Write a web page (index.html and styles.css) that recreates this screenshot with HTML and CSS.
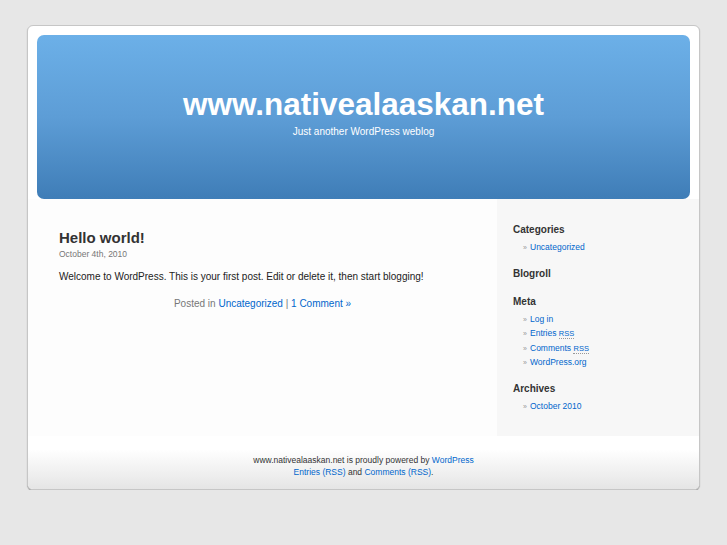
FILE: index.html
```html
<!DOCTYPE html>
<html lang="en">
<head>
<meta charset="utf-8">
<title>www.nativealaaskan.net</title>
<link rel="stylesheet" href="styles.css">
</head>
<body>
<div class="page">
  <header class="header">
    <h1 class="site-title"><a href="#">www.nativealaaskan.net</a></h1>
    <div class="site-desc">Just another WordPress weblog</div>
  </header>
  <div class="main-row">
    <main class="content">
      <article class="post">
        <h2 class="post-title"><a href="#">Hello world!</a></h2>
        <div class="post-date">October 4th, 2010</div>
        <p class="post-body">Welcome to WordPress. This is your first post. Edit or delete it, then start blogging!</p>
        <p class="post-meta">Posted in <a href="#">Uncategorized</a> | <a href="#">1 Comment &raquo;</a></p>
      </article>
    </main>
    <aside class="sidebar">
      <section class="widget">
        <h2 class="widget-title">Categories</h2>
        <ul class="widget-list">
          <li><a href="#">Uncategorized</a></li>
        </ul>
      </section>
      <section class="widget widget-empty">
        <h2 class="widget-title">Blogroll</h2>
      </section>
      <section class="widget">
        <h2 class="widget-title">Meta</h2>
        <ul class="widget-list">
          <li><a href="#">Log in</a></li>
          <li><a href="#">Entries <abbr class="rss">RSS</abbr></a></li>
          <li><a href="#">Comments <abbr class="rss">RSS</abbr></a></li>
          <li><a href="#">WordPress.org</a></li>
        </ul>
      </section>
      <section class="widget">
        <h2 class="widget-title">Archives</h2>
        <ul class="widget-list">
          <li><a href="#">October 2010</a></li>
        </ul>
      </section>
    </aside>
  </div>
  <footer class="footer">
    <p>www.nativealaaskan.net is proudly powered by <a href="#">WordPress</a><br>
    <a href="#">Entries (RSS)</a> and <a href="#">Comments (RSS)</a>.</p>
  </footer>
</div>
</body>
</html>
```
FILE: styles.css
```css
html, body {
  margin: 0;
  padding: 0;
}
body {
  background: #e7e7e7;
  font-family: "Liberation Sans", Arial, sans-serif;
  color: #333;
  padding: 25px 0 0 27px;
}
a {
  color: #0066cc;
  text-decoration: none;
}
.page {
  width: 671px;
  height: 463px;
  background: #fff;
  border: 1px solid #c6c6c6;
  border-radius: 6px;
  box-shadow: 0 1px 1px rgba(0, 0, 0, 0.3);
  display: flex;
  flex-direction: column;
  overflow: hidden;
}
.header {
  margin: 9px 9px 0 9px;
  height: 164px;
  border-radius: 7px;
  background: linear-gradient(#6cb0e8, #5d9dd6 50%, #3f7db7);
  display: flex;
  flex-direction: column;
  align-items: center;
  padding-top: 51px;
  box-sizing: border-box;
}
.site-title {
  margin: 0;
  font-size: 31.5px;
  line-height: 36px;
  font-weight: bold;
}
.site-title a {
  color: #fff;
}
.site-desc {
  margin-top: 4px;
  color: #fff;
  font-size: 10px;
  line-height: 12px;
}
.main-row {
  display: flex;
  height: 237px;
}
.content {
  width: 469px;
  padding: 30px 0 0 31px;
  box-sizing: border-box;
  background: #fdfdfd;
}
.post-title {
  margin: 0;
  font-size: 15px;
  line-height: 18px;
  font-weight: bold;
}
.post-title a {
  color: #333;
}
.post-date {
  margin-top: 1px;
  font-size: 8.5px;
  line-height: 12px;
  color: #777;
}
.post-body {
  margin: 10px 0 0 0;
  font-size: 10px;
  line-height: 14px;
  color: #222;
}
.post-meta {
  margin: 13px 0 0 -31px;
  font-size: 10px;
  line-height: 14px;
  color: #777;
  text-align: center;
}
.sidebar {
  flex: 1;
  background: #f7f7f7;
  padding: 25px 0 0 16px;
  box-sizing: border-box;
}
.widget {
  margin-bottom: 13.5px;
}
.widget-empty {
  margin-bottom: 16px;
}
.widget-title {
  margin: 0;
  font-size: 10px;
  line-height: 12px;
  font-weight: bold;
  color: #333;
}
.widget-list {
  list-style: none;
  margin: 0;
  padding: 4px 0 0 10px;
  font-size: 8.5px;
  line-height: 14.5px;
}
.widget:first-child .widget-list {
  padding-top: 3.5px;
}
.widget-list li {
  height: 14.5px;
}
.widget-list li::before {
  content: "\00BB";
  color: #999;
  font-size: 7px;
  line-height: 1;
  display: inline-block;
  width: 7px;
}
.rss {
  font-size: 7.5px;
  line-height: 1;
  border-bottom: 1px dotted #999;
  text-decoration: none;
}
.footer {
  flex: 1;
  background: linear-gradient(#fff 25%, #e5e5e5);
  padding-top: 18px;
  box-sizing: border-box;
}
.footer p {
  margin: 0;
  text-align: center;
  font-size: 8.5px;
  line-height: 12px;
  color: #333;
}
```
